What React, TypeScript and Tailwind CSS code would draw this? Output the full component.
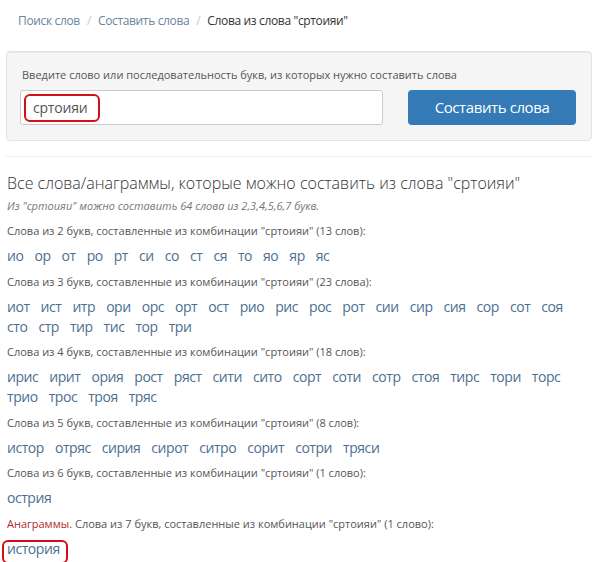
import React from "react";

const W = "сртоияи";

const groups: { n: number; count: string; words: string[]; anagram?: boolean }[] = [
  { n: 2, count: "13 слов", words: ["ио", "ор", "от", "ро", "рт", "си", "со", "ст", "ся", "то", "яо", "яр", "яс"] },
  {
    n: 3,
    count: "23 слова",
    words: ["иот", "ист", "итр", "ори", "орс", "орт", "ост", "рио", "рис", "рос", "рот", "сии", "сир", "сия", "сор", "сот", "соя", "сто", "стр", "тир", "тис", "тор", "три"],
  },
  {
    n: 4,
    count: "18 слов",
    words: ["ирис", "ирит", "ория", "рост", "ряст", "сити", "сито", "сорт", "соти", "сотр", "стоя", "тирс", "тори", "торс", "трио", "трос", "троя", "тряс"],
  },
  { n: 5, count: "8 слов", words: ["истор", "отряс", "сирия", "сирот", "ситро", "сорит", "сотри", "тряси"] },
  { n: 6, count: "1 слово", words: ["острия"] },
  { n: 7, count: "1 слово", words: ["история"], anagram: true },
];

export default function App() {
  return (
    <div
      className="w-[600px] h-[562px] overflow-hidden bg-white pl-[6px] pr-[8px]"
      style={{ fontFamily: "'Open Sans', 'Noto Sans', sans-serif" }}
    >
      {/* breadcrumb */}
      <div className="flex items-center h-[42px] pl-[12px] text-[12px] leading-[16px] tracking-[-0.35px]">
        <span className="text-[#6a849c]">Поиск слов</span>
        <span className="text-[#c8c8c8] px-[7px]">/</span>
        <span className="text-[#6a849c]">Составить слова</span>
        <span className="text-[#c8c8c8] px-[7px]">/</span>
        <span className="text-[#333]">Слова из слова "{W}"</span>
      </div>

      {/* panel */}
      <div className="mt-[9px] h-[90px] rounded-[4px] border border-[#e3e3e3] bg-[#f5f5f5] px-[13px] pt-[15px] shadow-[inset_0_1px_1px_rgba(0,0,0,0.05)]">
        <div className="pl-[2px] text-[11px] leading-[16px] text-[#555]">
          Введите слово или последовательность букв, из которых нужно составить слова
        </div>
        <div className="mt-[7px] flex">
          <div className="relative h-[35px] w-[363px] rounded-[3px] border border-[#ccc] bg-white">
            <span className="absolute left-[12px] top-[7px] text-[14px] leading-[20px] tracking-[-0.2px] text-[#555]">{W}</span>
            <span className="absolute left-[3px] top-[3px] h-[28px] w-[76px] rounded-[6px] border-[2.5px] border-[#d0101c]" />
          </div>
          <div className="ml-[25px] flex h-[35px] w-[168px] items-center justify-center rounded-[4px] bg-[#337ab7] text-[15px] tracking-[-0.4px] text-white">
            Составить слова
          </div>
        </div>
      </div>

      <div className="mt-[15px] h-px bg-[#eee]" />

      <div className="pl-px">
        <h1 className="mt-[14px] text-[16px] font-light leading-[24px] text-[#333]">
          Все слова/анаграммы, которые можно составить из слова "{W}"
        </h1>
        <div className="mt-[3px] text-[11px] italic leading-[16px] text-[#777]">
          Из "{W}" можно составить 64 слова из 2,3,4,5,6,7 букв.
        </div>

        {groups.map((g, i) => (
          <div key={g.n} className={i === 0 ? "mt-[9px]" : "mt-[7.6px]"}>
            <div className="text-[11px] leading-[16px] text-[#555]">
              {g.anagram && <span className="text-[#b22a2a]">Анаграммы. </span>}
              Слова из {g.n} букв, составленные из комбинации "{W}" ({g.count}):
            </div>
            <div className="mt-[7px] flex flex-wrap gap-x-[11px] text-[14px] leading-[20px] tracking-[-0.45px] text-[#4c6f91]">
              {g.words.map((w) =>
                g.anagram ? (
                  <span key={w} className="relative">
                    {w}
                    <span className="absolute left-[-5px] right-[-8px] top-[1px] bottom-[-5px] rounded-[6px] border-[2.5px] border-[#d0101c]" />
                  </span>
                ) : (
                  <span key={w}>{w}</span>
                )
              )}
            </div>
          </div>
        ))}
      </div>
    </div>
  );
}
